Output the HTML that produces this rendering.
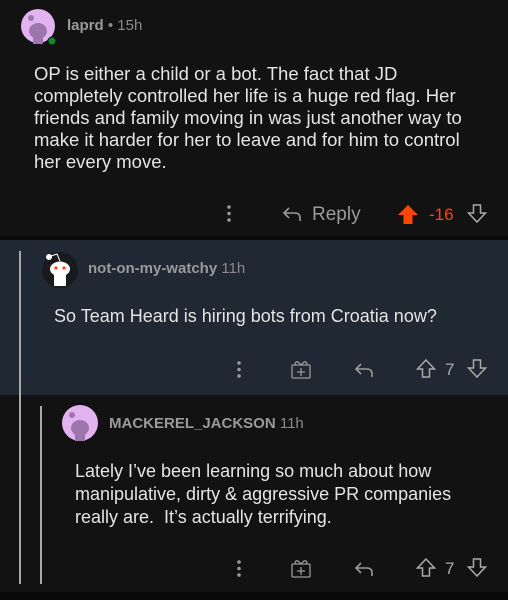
<!DOCTYPE html>
<html><head><style>
*{margin:0;padding:0;box-sizing:border-box}
body{width:508px;height:600px;background:#121212;font-family:"Liberation Sans",Arial,sans-serif;position:relative;overflow:hidden;color:#d7dadc}
.a{position:absolute}
.name{font-size:15px;font-weight:bold;color:#9a9a9a}
.time{font-size:15px;color:#8a8a8a}
.body{font-size:18px;line-height:23px;color:#e4e4e4}
svg{position:absolute;overflow:visible}
</style></head><body>
<div class="a" style="left:0;top:0;width:508px;height:238px;background:#121212"></div>
<div class="a" style="left:0;top:236px;width:508px;height:4px;background:#0a0a0a"></div>
<div class="a" style="left:0;top:240px;width:508px;height:155px;background:#202833"></div>
<div class="a" style="left:0;top:592px;width:508px;height:8px;background:#0a0a0a"></div>

<!-- comment 1 -->
<svg style="left:21px;top:8px" width="36" height="38"><circle cx="17" cy="18" r="17" fill="#e3b2f0"/><ellipse cx="17" cy="23" rx="9" ry="8" fill="#9c76ad"/><circle cx="10" cy="10" r="3" fill="#9c76ad"/><rect x="12" y="28" width="10" height="8" fill="#9c76ad"/><circle cx="31" cy="33" r="4" fill="#0e8a28" stroke="#121212" stroke-width="1"/></svg>
<div class="a name" style="left:67px;top:17px">laprd <span class="time" style="font-weight:normal">• 15h</span></div>
<div class="a body" style="left:34px;top:63px;width:432px;font-size:18.5px;line-height:22px">OP is either a child or a bot. The fact that JD completely controlled her life is a huge red flag. Her friends and family moving in was just another way to make it harder for her to leave and for him to control her every move.</div>
<svg style="left:226px;top:205px" width="6" height="18"><circle cx="3" cy="2" r="1.8" fill="#999"/><circle cx="3" cy="8.5" r="1.8" fill="#999"/><circle cx="3" cy="15" r="1.8" fill="#999"/></svg>
<svg style="left:282px;top:205px" width="20" height="18"><path d="M7 3 L2 8 L7 13 M2 8 H13 Q18 8 18 13 V16" fill="none" stroke="#999" stroke-width="1.6"/></svg>
<div class="a" style="left:312px;top:204px;font-size:19px;color:#9a9a9a">Reply</div>
<svg style="left:398px;top:205px" width="22" height="20"><path d="M10 0 L20 10 H14.5 V19 H5.5 V10 H0 Z" fill="#ff4500"/></svg>
<div class="a" style="left:429px;top:205px;font-size:17px;color:#ff4500">-16</div>
<svg style="left:467px;top:204px" width="20" height="20"><path d="M6.5 1 H13.5 V9 H18.5 L10 18 L1.5 9 H6.5 Z" fill="none" stroke="#aaa" stroke-width="1.5"/></svg>

<!-- comment 2 -->
<div class="a" style="left:19px;top:251px;width:2px;height:333px;background:#a8a8a8"></div>
<svg style="left:41px;top:250px" width="38" height="38"><circle cx="19" cy="20" r="18" fill="#181a1d"/><ellipse cx="19" cy="19" rx="10" ry="7.5" fill="#fff"/><circle cx="15" cy="18" r="1.6" fill="#ff4500"/><circle cx="23" cy="18" r="1.6" fill="#ff4500"/><path d="M13 25 h12 v11 h-12z" fill="#fff"/><circle cx="8" cy="7" r="3" fill="#fff"/><path d="M10 6 L16 4 L19 11" stroke="#fff" fill="none" stroke-width="1"/></svg>
<div class="a name" style="left:88px;top:260px">not-on-my-watchy <span class="time" style="font-weight:normal">11h</span></div>
<div class="a body" style="left:54px;top:305px">So Team Heard is hiring bots from Croatia now?</div>
<svg style="left:236px;top:361px" width="6" height="18"><circle cx="3" cy="2" r="1.8" fill="#999"/><circle cx="3" cy="8.5" r="1.8" fill="#999"/><circle cx="3" cy="15" r="1.8" fill="#999"/></svg>
<svg style="left:291px;top:360px" width="20" height="20"><rect x="1" y="5" width="18" height="13" rx="1" fill="none" stroke="#999" stroke-width="1.3"/><path d="M10 8 v8 M6 12 h8 M4 5 Q4 1 7 2 L10 5 L13 2 Q16 1 16 5" fill="none" stroke="#999" stroke-width="1.3"/></svg>
<svg style="left:354px;top:361px" width="20" height="18"><path d="M7 3 L2 8 L7 13 M2 8 H13 Q18 8 18 13 V16" fill="none" stroke="#999" stroke-width="1.6"/></svg>
<svg style="left:416px;top:359px" width="20" height="20"><path d="M10 1 L18.5 10 H13.5 V18 H6.5 V10 H1.5 Z" fill="none" stroke="#aaa" stroke-width="1.5"/></svg>
<div class="a" style="left:445px;top:360px;font-size:17px;color:#aaa">7</div>
<svg style="left:467px;top:359px" width="20" height="20"><path d="M6.5 1 H13.5 V9 H18.5 L10 18 L1.5 9 H6.5 Z" fill="none" stroke="#aaa" stroke-width="1.5"/></svg>

<!-- comment 3 -->
<div class="a" style="left:40px;top:406px;width:2px;height:178px;background:#a8a8a8"></div>
<svg style="left:62px;top:405px" width="36" height="36"><circle cx="18" cy="18" r="18" fill="#e3b2f0"/><ellipse cx="18" cy="23" rx="9" ry="8" fill="#9c76ad"/><circle cx="10" cy="10" r="3" fill="#9c76ad"/><rect x="13" y="28" width="10" height="8" fill="#9c76ad"/></svg>
<div class="a name" style="left:109px;top:415px">MACKEREL_JACKSON <span class="time" style="font-weight:normal">11h</span></div>
<div class="a body" style="left:75px;top:460px;width:420px">Lately I’ve been learning so much about how manipulative, dirty &amp; aggressive PR companies really are.&nbsp; It’s actually terrifying.</div>
<svg style="left:236px;top:560px" width="6" height="18"><circle cx="3" cy="2" r="1.8" fill="#999"/><circle cx="3" cy="8.5" r="1.8" fill="#999"/><circle cx="3" cy="15" r="1.8" fill="#999"/></svg>
<svg style="left:291px;top:559px" width="20" height="20"><rect x="1" y="5" width="18" height="13" rx="1" fill="none" stroke="#999" stroke-width="1.3"/><path d="M10 8 v8 M6 12 h8 M4 5 Q4 1 7 2 L10 5 L13 2 Q16 1 16 5" fill="none" stroke="#999" stroke-width="1.3"/></svg>
<svg style="left:354px;top:560px" width="20" height="18"><path d="M7 3 L2 8 L7 13 M2 8 H13 Q18 8 18 13 V16" fill="none" stroke="#999" stroke-width="1.6"/></svg>
<svg style="left:416px;top:558px" width="20" height="20"><path d="M10 1 L18.5 10 H13.5 V18 H6.5 V10 H1.5 Z" fill="none" stroke="#aaa" stroke-width="1.5"/></svg>
<div class="a" style="left:445px;top:559px;font-size:17px;color:#aaa">7</div>
<svg style="left:467px;top:558px" width="20" height="20"><path d="M6.5 1 H13.5 V9 H18.5 L10 18 L1.5 9 H6.5 Z" fill="none" stroke="#aaa" stroke-width="1.5"/></svg>
</body></html>
